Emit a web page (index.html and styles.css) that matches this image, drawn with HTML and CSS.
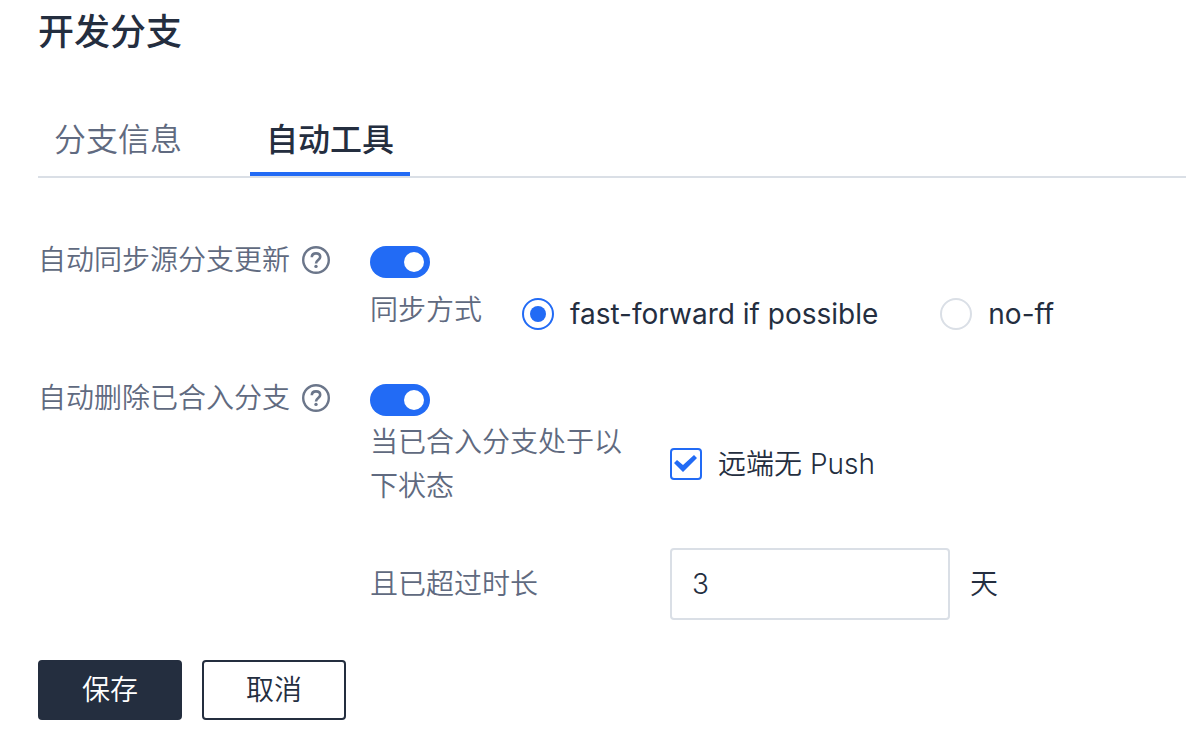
FILE: index.html
```html
<!DOCTYPE html>
<html lang="zh-CN">
<head>
<meta charset="utf-8">
<meta name="viewport" content="width=device-width, initial-scale=1">
<title>开发分支</title>
<link rel="stylesheet" href="styles.css">
</head>
<body>
<main class="page">
  <h1 class="title">开发分支</h1>
  <nav class="tabs" role="tablist">
    <button class="tab" type="button" role="tab" aria-selected="false">分支信息</button>
    <button class="tab tab-active" type="button" role="tab" aria-selected="true">自动工具</button>
  </nav>
  <form class="form">
    <section class="setting">
      <div class="setting-name">
        <label for="sync">自动同步源分支更新</label>
        <svg class="help" viewBox="0 0 28 28" aria-hidden="true"><circle cx="14" cy="14" r="12.8"/><path d="M9.8 11.3C9.8 8.9 11.6 7.4 14 7.4s4.2 1.4 4.2 3.6c0 2.8-4.2 3.2-4.2 6.4"/><circle class="dot" cx="14" cy="20.4" r="1.7"/></svg>
      </div>
      <div class="setting-body">
        <input class="switch" type="checkbox" role="switch" id="sync" checked>
        <div class="method" role="radiogroup" aria-labelledby="method-name">
          <span class="sub-label method-name" id="method-name">同步方式</span>
          <div class="choices">
            <label class="choice"><input class="radio" type="radio" name="method" checked>fast-forward if possible</label>
            <label class="choice"><input class="radio" type="radio" name="method">no-ff</label>
          </div>
        </div>
      </div>
    </section>
    <section class="setting">
      <div class="setting-name">
        <label for="cleanup">自动删除已合入分支</label>
        <svg class="help" viewBox="0 0 28 28" aria-hidden="true"><circle cx="14" cy="14" r="12.8"/><path d="M9.8 11.3C9.8 8.9 11.6 7.4 14 7.4s4.2 1.4 4.2 3.6c0 2.8-4.2 3.2-4.2 6.4"/><circle class="dot" cx="14" cy="20.4" r="1.7"/></svg>
      </div>
      <div class="setting-body">
        <input class="switch" type="checkbox" role="switch" id="cleanup" checked>
        <div class="condition">
          <span class="sub-label">当已合入分支处于以下状态</span>
          <label class="choice"><input class="check" type="checkbox" checked>远端无 Push</label>
        </div>
        <div class="condition duration">
          <label class="sub-label" for="days">且已超过时长</label>
          <div class="days"><input class="days-input" type="text" id="days" value="3"><span>天</span></div>
        </div>
      </div>
    </section>
    <div class="actions">
      <button class="button button-primary" type="button">保存</button>
      <button class="button" type="button">取消</button>
    </div>
  </form>
</main>
</body>
</html>
```
FILE: styles.css
```css
* { box-sizing: border-box; }

body {
  margin: 0;
  background: #fff;
  color: #242e3f;
  font: 350 28px/44px Inter, "Noto Sans CJK SC", sans-serif;
}

button, input { font: inherit; color: inherit; margin: 0; }

.page { padding: 8px 0 30px 38px; }

.title {
  margin: 0 0 48px;
  font-size: 36px;
  line-height: 48px;
  font-weight: 500;
}

.tabs {
  display: flex;
  gap: 52px;
  border-bottom: 2px solid #dadfe6;
}

.tab {
  padding: 16px 16px 12px;
  border: 0;
  border-bottom: 4px solid transparent;
  background: none;
  color: #606a80;
  font-size: 32px;
  line-height: 40px;
}

.tab-active {
  border-color: #226bf5;
  color: #242e3f;
  font-weight: 500;
}

.form {
  display: flex;
  flex-direction: column;
  gap: 40px;
  padding-top: 60px;
}

.setting {
  display: grid;
  grid-template-columns: 332px 1fr;
}

.setting-name {
  display: flex;
  align-items: center;
  gap: 12px;
  align-self: start;
  color: #606a80;
}

.help {
  width: 28px;
  height: 28px;
  fill: none;
  stroke: #6b768a;
  stroke-width: 2.4;
}

.help path { stroke-width: 2.6; }

.help .dot { fill: #6b768a; stroke: none; }

.setting-body { padding-top: 8px; }

.switch {
  appearance: none;
  display: flex;
  align-items: center;
  justify-content: flex-end;
  width: 60px;
  height: 32px;
  padding: 6px;
  border-radius: 16px;
  background: #226bf5;
}

.switch::before {
  content: "";
  width: 20px;
  height: 20px;
  border-radius: 50%;
  background: #fff;
}

.sub-label { color: #606a80; }

.method {
  display: flex;
  padding-top: 10px;
}

.method-name { flex: 0 0 152px; }

.choices {
  display: flex;
  gap: 62px;
  padding-top: 4px;
  font-weight: 400;
}

.choice {
  display: flex;
  align-items: center;
  gap: 16px;
}

.radio {
  appearance: none;
  display: grid;
  place-items: center;
  width: 32px;
  height: 32px;
  border: 2px solid #dadfe6;
  border-radius: 50%;
}

.radio:checked { border-color: #226bf5; }

.radio:checked::before {
  content: "";
  width: 16px;
  height: 16px;
  border-radius: 50%;
  background: #226bf5;
}

.condition {
  display: grid;
  grid-template-columns: 260px 1fr;
  gap: 40px;
  align-items: center;
  padding-top: 4px;
}

.check {
  appearance: none;
  display: grid;
  width: 32px;
  height: 32px;
  border: 2px solid #226bf5;
  border-radius: 4px;
}

.check::before {
  content: "";
  background: #226bf5;
  clip-path: polygon(2px 13px, 5px 10px, 11px 15px, 22px 5px, 25px 8px, 11px 22px);
}

.duration { padding-top: 40px; }

.days {
  display: flex;
  align-items: center;
  gap: 20px;
}

.days-input {
  width: 280px;
  height: 72px;
  padding: 0 20px;
  border: 2px solid #dadfe6;
  border-radius: 4px;
  background: #fff;
}

.actions { display: flex; gap: 20px; }

.button {
  width: 144px;
  height: 60px;
  padding: 0;
  border: 2px solid #242e3f;
  border-radius: 4px;
  background: #fff;
}

.button-primary { background: #242e3f; color: #fff; }
```
